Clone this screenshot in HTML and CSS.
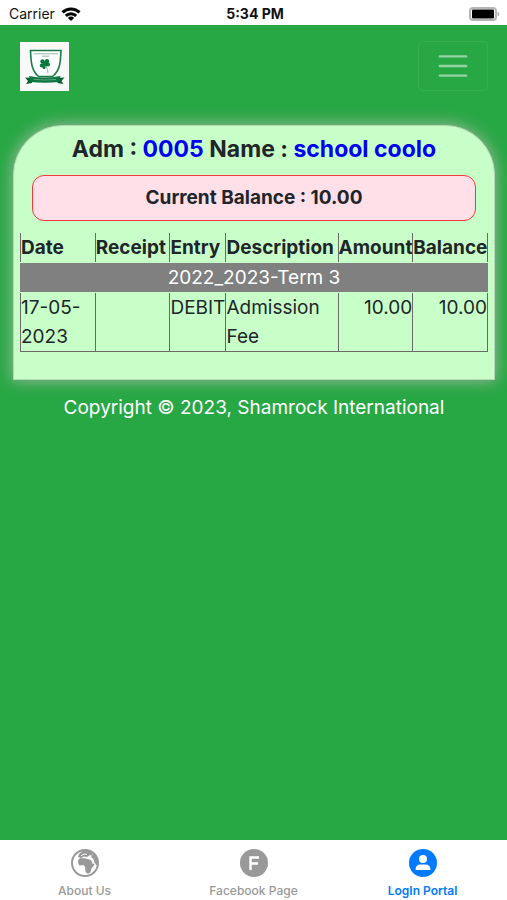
FILE: index.html
```html
<!DOCTYPE html>
<html lang="en">
<head>
  <meta charset="UTF-8" />
  <title>Shamrock International • Statement</title>
  <meta name="viewport" content="width=device-width, initial-scale=1" />
  <link rel="stylesheet" href="styles.css">
</head>
<body>
  <!-- Status bar -->
  <div class="status">
    <div class="carrier">
      <span>Carrier</span>
      <svg width="20" height="14" viewBox="0 0 20 14" fill="none" stroke="#000" stroke-width="3">
        <path d="M1.5 5.3a12.3 12.3 0 0 1 17 0" />
        <path d="M4.8 8.8a7.5 7.5 0 0 1 10.4 0" />
        <path d="M10 14l-3.1-3.1a4.4 4.4 0 0 1 6.2 0z" fill="#000" stroke="none" />
      </svg>
    </div>
    <strong>5:34 PM</strong>
    <div class="battery">
      <svg width="32" height="14" viewBox="0 0 32 14">
        <rect x="1" y="1" width="26" height="12" rx="3" fill="#fff" stroke="#b5b5b5" stroke-width="2" />
        <rect x="3" y="2.500" width="22" height="9" rx="1" fill="#000" />
        <path d="M28.500 4.500q2 1 2 2.500t-2 2.500z" fill="#b5b5b5" />
      </svg>
    </div>
  </div>

  <!-- Navbar -->
  <nav class="navbar">
    <a class="brand" href="#" aria-label="Shamrock International">
      <svg width="49" height="49" viewBox="0 0 49 49">
        <rect width="49" height="49" fill="#f7f8f7" />
        <path d="M10.500 8.500h30.500c-.5 12-1 20-8.500 26h-14c-7-6-7.500-14-8-26z" fill="#fff" stroke="#187c49" stroke-width="1.600" />
        <path d="M14 11.800h24M22 14.200h7" stroke="#8fbba0" stroke-width="1" />
        <g fill="#08783b">
          <circle cx="22.500" cy="19.500" r="2.200" />
          <circle cx="27" cy="19.300" r="2.200" />
          <circle cx="21.800" cy="23.500" r="2" />
          <circle cx="28" cy="22.500" r="2" />
          <circle cx="24" cy="25.500" r="1.600" />
          <path d="M22.500 19.500h4.500v5h-4.500z" />
        </g>
        <path d="M26 25q2 2 2 6" fill="none" stroke="#9aaba0" stroke-width="1" />
        <path d="M5 35.500l7 .5v5l-6 1 2-3zM44.500 35.500l-7 .5v5l6 1-2-3z" fill="#075f32" />
        <path d="M9 34q16 3 31.500 0l-1.500 6q-14 1.500-28.500 0z" fill="#0d7641" />
        <path d="M14 37.500q11 1 22 0" fill="none" stroke="#5fa07a" stroke-width="1" />
      </svg>
    </a>
    <button class="toggler" type="button" aria-label="Toggle navigation">
      <svg width="36" height="36" viewBox="0 0 30 30" fill="none" stroke="#fff" stroke-opacity=".5" stroke-width="2" stroke-linecap="round" stroke-miterlimit="10">
        <path d="M4 7h22M4 15h22M4 23h22" />
      </svg>
    </button>
  </nav>

  <!-- Statement -->
  <main>
    <section class="card">
      <h1>Adm : <span>0005</span> Name : <span>school coolo</span></h1>
      <div class="balance">Current Balance : 10.00</div>
      <table class="statement">
        <thead>
          <tr>
            <th class="col-date">Date</th>
            <th class="col-receipt">Receipt</th>
            <th class="col-entry">Entry</th>
            <th class="col-desc">Description</th>
            <th class="col-amount">Amount</th>
            <th class="col-balance">Balance</th>
          </tr>
        </thead>
        <tbody>
          <tr class="term">
            <td colspan="6">2022_2023-Term 3</td>
          </tr>
          <tr>
            <td>17-05-2023</td>
            <td></td>
            <td>DEBIT</td>
            <td>Admission Fee</td>
            <td class="num">10.00</td>
            <td class="num">10.00</td>
          </tr>
        </tbody>
      </table>
    </section>
    <footer>Copyright © 2023, Shamrock International</footer>
  </main>

  <!-- Bottom tabs -->
  <nav class="tabs">
    <a href="#">
      <svg width="28" height="28" viewBox="0 0 28 28">
        <circle cx="14" cy="14" r="13" fill="#fff" stroke="#999" stroke-width="2" />
        <path d="M8 5l4-3.500h6l4 2-1 2.500-3 .5-2 1.500-3-.5-3 1.500-3-1z" fill="#999" />
        <path d="M7 12.500q0-3 3-3.500l5 .5 5 1.500 1.500 3.500 2 .5q-.5 2.500-3 4.500l-.5 2.500q-1 2.500-3 2.500t-2.500-2l-.5-4.500-1.500-2-4 .5q-1.500-1-1.500-4z" fill="#999" />
        <path d="M20.500 6l3-1.500q3.500 4 3.500 9l-1.500 3-2-3-1-3.500-2-1.500z" fill="#999" />
        <path d="M10 6.800l3-1.800 3 .5" fill="none" stroke="#fff" stroke-width="1" />
      </svg>
      <span>About Us</span>
    </a>
    <a href="#">
      <svg width="28" height="28" viewBox="0 0 28 28">
        <circle cx="14" cy="14" r="14" fill="#999" />
        <path d="M10.500 21V8.500H19M10.500 14.500H18" fill="none" stroke="#fff" stroke-width="2.400" />
      </svg>
      <span>Facebook Page</span>
    </a>
    <a class="active" href="#">
      <svg width="28" height="28" viewBox="0 0 28 28">
        <circle cx="14" cy="14" r="14" fill="#007aff" />
        <circle cx="14" cy="10" r="4" fill="#fff" />
        <path d="M6.500 21q0-5.500 5-5.500h5q5 0 5 5.500z" fill="#fff" />
      </svg>
      <span>LogIn Portal</span>
    </a>
  </nav>
</body>
</html>
```

FILE: styles.css
```css
:root {
  --green: #28a745;
  --mint: #c8ffc8;
  --txt: #212529;
  font-family: Inter, "Liberation Sans", sans-serif;
}
* { box-sizing: border-box; margin: 0; padding: 0; }
body {
  min-height: 100vh;
  display: flex;
  flex-direction: column;
  background: var(--green);
  color: var(--txt);
}
svg { display: block; }
a { text-decoration: none; }

.status {
  display: grid;
  grid-template-columns: 1fr auto 1fr;
  align-items: center;
  height: 25px;
  padding: 2px 6px 0 9px;
  background: #fff;
  color: #111;
  font-size: 14px;
}
.status strong { font-weight: 700; }
.carrier { display: flex; align-items: center; gap: 6px; }
.battery { justify-self: end; }

.navbar {
  display: flex;
  justify-content: space-between;
  align-items: center;
  padding: 16px 19px 16px 20px;
}
.toggler {
  padding: 6px 16px;
  background: transparent;
  border: 1px solid #ffffff12;
  border-radius: 5px;
  cursor: pointer;
}

main { flex: 1; padding: 18px 12px 0 13px; }
.card {
  padding: 8px 6px 27px;
  background: var(--mint);
  border: 1px solid #b5d8b5;
  border-radius: 50px 50px 0 0;
  box-shadow: 0 0 15px 1px #98b898;
}
h1 {
  font-size: 23px;
  line-height: 30px;
  font-weight: 700;
  text-align: center;
}
h1 span { color: #0000f0; }
.balance {
  margin: 11px 12px 12px;
  padding: 6px;
  background: #ffe0e9;
  border: 1px solid #ef3b3b;
  border-radius: 12px;
  font-size: 19px;
  line-height: 32px;
  font-weight: 700;
  text-align: center;
}

.statement {
  width: 100%;
  table-layout: fixed;
  border-collapse: collapse;
  font-size: 19px;
  line-height: 29px;
}
.statement th, .statement td {
  border: 1px solid #696969;
  vertical-align: top;
}
.statement th {
  border-top: none;
  border-bottom-color: var(--mint);
  font-weight: 700;
  text-align: left;
}
.statement .term td {
  background: #808080;
  border-color: #808080;
  border-bottom-color: var(--mint);
  color: #fff;
  text-align: center;
}
.statement .num { text-align: right; }
.col-date, .col-receipt, .col-amount, .col-balance { width: 16%; }
.col-entry { width: 12%; }
.col-desc { width: 24%; }

footer {
  padding-top: 13px;
  color: #fff;
  font-size: 19px;
  line-height: 30px;
  text-align: center;
}

.tabs {
  display: grid;
  grid-template-columns: repeat(3, 1fr);
  height: 60px;
  padding-top: 9px;
  background: #fff;
}
.tabs a {
  display: flex;
  flex-direction: column;
  align-items: center;
  gap: 6px;
  color: #999;
  font-size: 12px;
  line-height: 16px;
  font-weight: 500;
}
.tabs .active { color: #007aff; font-weight: 600; }
```
